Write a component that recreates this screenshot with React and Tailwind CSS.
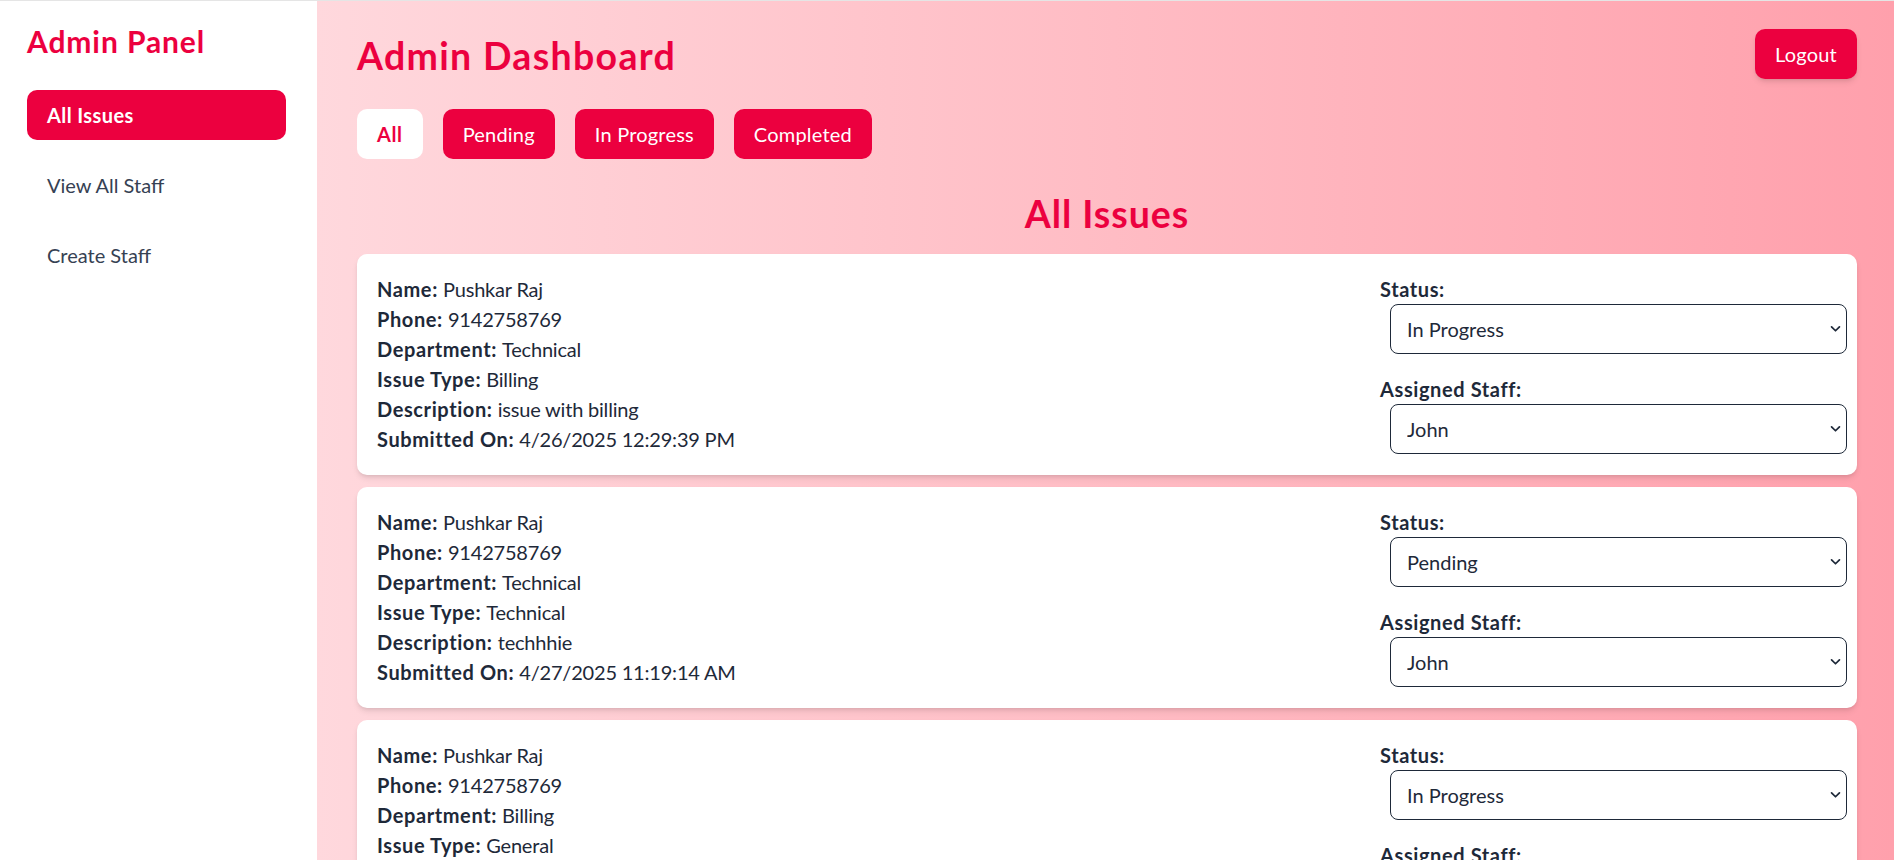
import React, { useState } from "react"

const issues = [
  {
    id: 1,
    name: "Pushkar Raj",
    phone: "9142758769",
    department: "Technical",
    issueType: "Billing",
    description: "issue with billing",
    submittedOn: "4/26/2025 12:29:39 PM",
    status: "In Progress",
    staff: "John"
  },
  {
    id: 2,
    name: "Pushkar Raj",
    phone: "9142758769",
    department: "Technical",
    issueType: "Technical",
    description: "techhhie",
    submittedOn: "4/27/2025 11:19:14 AM",
    status: "Pending",
    staff: "John"
  },
  {
    id: 3,
    name: "Pushkar Raj",
    phone: "9142758769",
    department: "Billing",
    issueType: "General",
    description: "general query",
    submittedOn: "4/28/2025 10:05:22 AM",
    status: "In Progress",
    staff: "John"
  }
]

const filters = ["All", "Pending", "In Progress", "Completed"]

const Chevron = () => (
  <svg
    viewBox="0 0 12 8"
    className="pointer-events-none absolute right-[6px] top-1/2 h-[7px] w-[11px] -translate-y-1/2 text-gray-800"
    fill="none"
    stroke="currentColor"
    strokeWidth="2"
    strokeLinecap="round"
    strokeLinejoin="round"
  >
    <path d="M1.5 1.5 6 6l4.5-4.5" />
  </svg>
)

const SelectBox = ({ value, options, onChange }) => (
  <div className="relative ml-[10px] w-full">
    <select
      value={value}
      onChange={e => onChange(e.target.value)}
      className="block h-[50px] w-full appearance-none rounded-[8px] border border-gray-800 bg-white pl-[16px] pr-[30px] text-[20px] leading-[30px] text-gray-800 outline-none"
    >
      {options.map(o => (
        <option key={o} value={o}>
          {o}
        </option>
      ))}
    </select>
    <Chevron />
  </div>
)

const Row = ({ label, value }) => (
  <p>
    <span className="font-bold tracking-[0.03em]">{label}:</span>{" "}
    <span className="tracking-[-0.01em]">{value}</span>
  </p>
)

const IssueCard = ({ issue }) => {
  const [status, setStatus] = useState(issue.status)
  const [staff, setStaff] = useState(issue.staff)

  return (
    <div className="flex justify-between rounded-[10px] bg-white px-[20px] pb-[21px] pt-[20px] shadow-md">
      <div className="text-[20px] leading-[30px] text-gray-800">
        <Row label="Name" value={issue.name} />
        <Row label="Phone" value={issue.phone} />
        <Row label="Department" value={issue.department} />
        <Row label="Issue Type" value={issue.issueType} />
        <Row label="Description" value={issue.description} />
        <Row label="Submitted On" value={issue.submittedOn} />
      </div>
      <div className="w-[457px] shrink-0 text-[20px] leading-[30px] text-gray-800">
        <label className="block font-bold tracking-[0.03em]">Status:</label>
        <SelectBox
          value={status}
          options={["Pending", "In Progress", "Completed"]}
          onChange={setStatus}
        />
        <label className="mt-[20px] block font-bold tracking-[0.03em]">
          Assigned Staff:
        </label>
        <SelectBox
          value={staff}
          options={["John", "Jane", "Alex"]}
          onChange={setStaff}
        />
      </div>
    </div>
  )
}

export default function App() {
  const [filter, setFilter] = useState("All")
  const [activeNav, setActiveNav] = useState("All Issues")

  return (
    <div
      className="flex min-h-screen border-t border-[#e5e5e5]"
      style={{ fontFamily: '"Segoe UI", Lato, "Noto Sans", sans-serif' }}
    >
      {/* Sidebar */}
      <aside className="w-[317px] shrink-0 bg-white pl-[27px] pr-[31px] pt-[20px]">
        <h2 className="mb-[29px] text-[30px] font-bold leading-[40px] tracking-[0.03em] text-rose-600">
          Admin Panel
        </h2>
        <nav className="flex flex-col gap-[20px]">
          {["All Issues", "View All Staff", "Create Staff"].map(item => (
            <button
              key={item}
              onClick={() => setActiveNav(item)}
              className={
                activeNav === item
                  ? "rounded-[10px] bg-rose-600 px-[20px] py-[10px] text-left text-[20px] font-bold leading-[30px] tracking-[0.02em] text-white"
                  : "rounded-[10px] px-[20px] py-[10px] text-left text-[20px] leading-[30px] text-gray-700"
              }
            >
              {item}
            </button>
          ))}
        </nav>
      </aside>

      {/* Main */}
      <main className="flex-1 bg-linear-to-r from-[#ffd8dd] to-[#ffa0ac] pb-[40px] pl-[40px] pr-[37px] pt-[28px]">
        <div className="mb-[30px] flex items-center justify-between">
          <h1 className="pt-[3px] text-[37.5px] font-bold leading-[45px] tracking-[0.035em] text-rose-600">
            Admin Dashboard
          </h1>
          <button className="rounded-[10px] bg-rose-600 px-[20px] py-[10px] text-[20px] leading-[30px] tracking-[0.01em] text-white shadow-md">
            Logout
          </button>
        </div>

        <div className="flex gap-[20px]">
          {filters.map(f => (
            <button
              key={f}
              onClick={() => setFilter(f)}
              className={
                filter === f
                  ? "rounded-[10px] bg-white px-[20px] py-[10px] text-[20px] font-bold leading-[30px] tracking-[0.03em] text-rose-600"
                  : "rounded-[10px] bg-rose-600 px-[20px] py-[10px] text-[20px] leading-[30px] tracking-[0.01em] text-white"
              }
            >
              {f}
            </button>
          ))}
        </div>

        <h2 className="mb-[18px] mt-[30px] pt-[2px] text-center text-[37.5px] font-bold leading-[45px] tracking-[0.025em] text-rose-600">
          All Issues
        </h2>

        <div className="flex flex-col gap-[12px]">
          {issues
            .filter(i => filter === "All" || i.status === filter)
            .map(issue => (
              <IssueCard key={issue.id} issue={issue} />
            ))}
        </div>
      </main>
    </div>
  )
}
